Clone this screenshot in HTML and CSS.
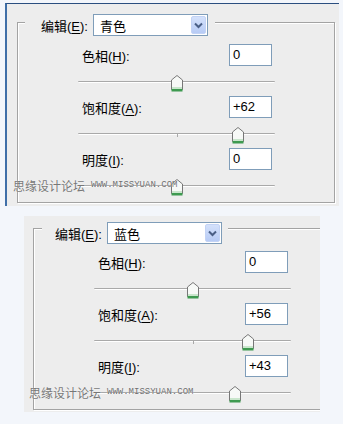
FILE: index.html
```html
<!DOCTYPE html>
<html lang="zh-CN">
<head>
    <meta charset="UTF-8">
    <title>色相/饱和度</title>
    <link rel="stylesheet" href="styles.css">
</head>
<body>
    <!-- first dialog: cyan channel -->
    <div class="panel panel-main">
        <div class="group">
            <div class="group-head">
                <span class="label">编辑(<u>E</u>):</span>
                <div class="select">
                    <span class="select-value">青色</span>
                    <span class="select-btn">
                        <svg width="9" height="7" viewBox="0 0 9 7"><path d="M1 1.5 L4.5 5 L8 1.5" fill="none" stroke="#4a5f86" stroke-width="2"/></svg>
                    </span>
                </div>
            </div>
            <div class="group-body">
                <div class="field"><span class="label">色相(<u>H</u>):</span><div class="num">0</div></div>
                <div class="slider">
                    <div class="track"></div>
                    <div class="thumb" style="left: 50%"><svg width="12" height="17" viewBox="0 0 12 17"><path d="M6 0.5 L11.5 5 L11.5 14.5 L0.5 14.5 L0.5 5 Z" fill="#f7f9f7" stroke="#777"/><rect x="1" y="12" width="10" height="2.5" fill="#c9e6cc"/><rect x="0.5" y="14" width="11" height="2.5" fill="#3e9a50"/></svg></div>
                </div>
                <div class="field"><span class="label">饱和度(<u>A</u>):</span><div class="num">+62</div></div>
                <div class="slider">
                    <div class="track"></div>
                    <div class="tick"></div>
                    <div class="thumb" style="left: 81%"><svg width="12" height="17" viewBox="0 0 12 17"><path d="M6 0.5 L11.5 5 L11.5 14.5 L0.5 14.5 L0.5 5 Z" fill="#f7f9f7" stroke="#777"/><rect x="1" y="12" width="10" height="2.5" fill="#c9e6cc"/><rect x="0.5" y="14" width="11" height="2.5" fill="#3e9a50"/></svg></div>
                </div>
                <div class="field"><span class="label">明度(<u>I</u>):</span><div class="num">0</div></div>
                <div class="slider">
                    <div class="track"></div>
                    <div class="thumb" style="left: 50%"><svg width="12" height="17" viewBox="0 0 12 17"><path d="M6 0.5 L11.5 5 L11.5 14.5 L0.5 14.5 L0.5 5 Z" fill="#f7f9f7" stroke="#777"/><rect x="1" y="12" width="10" height="2.5" fill="#c9e6cc"/><rect x="0.5" y="14" width="11" height="2.5" fill="#3e9a50"/></svg></div>
                    <div class="watermark">思缘设计论坛<span>WWW.MISSYUAN.COM</span></div>
                </div>
            </div>
        </div>
    </div>

    <!-- second dialog: blue channel -->
    <div class="panel panel-alt">
        <div class="group">
            <div class="group-head">
                <span class="label">编辑(<u>E</u>):</span>
                <div class="select">
                    <span class="select-value">蓝色</span>
                    <span class="select-btn">
                        <svg width="9" height="7" viewBox="0 0 9 7"><path d="M1 1.5 L4.5 5 L8 1.5" fill="none" stroke="#4a5f86" stroke-width="2"/></svg>
                    </span>
                </div>
            </div>
            <div class="group-body">
                <div class="field"><span class="label">色相(<u>H</u>):</span><div class="num">0</div></div>
                <div class="slider">
                    <div class="track"></div>
                    <div class="thumb" style="left: 50%"><svg width="12" height="17" viewBox="0 0 12 17"><path d="M6 0.5 L11.5 5 L11.5 14.5 L0.5 14.5 L0.5 5 Z" fill="#f7f9f7" stroke="#777"/><rect x="1" y="12" width="10" height="2.5" fill="#c9e6cc"/><rect x="0.5" y="14" width="11" height="2.5" fill="#3e9a50"/></svg></div>
                </div>
                <div class="field"><span class="label">饱和度(<u>A</u>):</span><div class="num">+56</div></div>
                <div class="slider">
                    <div class="track"></div>
                    <div class="tick"></div>
                    <div class="thumb" style="left: 78%"><svg width="12" height="17" viewBox="0 0 12 17"><path d="M6 0.5 L11.5 5 L11.5 14.5 L0.5 14.5 L0.5 5 Z" fill="#f7f9f7" stroke="#777"/><rect x="1" y="12" width="10" height="2.5" fill="#c9e6cc"/><rect x="0.5" y="14" width="11" height="2.5" fill="#3e9a50"/></svg></div>
                </div>
                <div class="field"><span class="label">明度(<u>I</u>):</span><div class="num">+43</div></div>
                <div class="slider">
                    <div class="track"></div>
                    <div class="thumb" style="left: 71.5%"><svg width="12" height="17" viewBox="0 0 12 17"><path d="M6 0.5 L11.5 5 L11.5 14.5 L0.5 14.5 L0.5 5 Z" fill="#f7f9f7" stroke="#777"/><rect x="1" y="12" width="10" height="2.5" fill="#c9e6cc"/><rect x="0.5" y="14" width="11" height="2.5" fill="#3e9a50"/></svg></div>
                    <div class="watermark">思缘设计论坛<span>WWW.MISSYUAN.COM</span></div>
                </div>
            </div>
        </div>
    </div>
</body>
</html>
```

FILE: styles.css
```css
body {
    margin: 0;
    background-color: #f3f6fb;
    font-family: "Liberation Sans", "Noto Sans CJK SC", sans-serif;
    font-size: 13px;
    color: #000;
}

u {
    text-decoration: underline;
    text-underline-offset: 2px;
}

/* dialog background */
.panel {
    box-sizing: border-box;
    background-color: #ededed;
}

.panel-main {
    margin: 3px 0 0 5px;
    width: 334px;
    height: 203px;
    border-top: 1px solid #2b4f80;
    border-left: 2px solid #3f6fa8;
}

.panel-alt {
    margin: 10px 0 0 24px;
    width: 296px;
    height: 196px;
    overflow: hidden;
}

/* etched group box */
.group {
    box-sizing: border-box;
    border: 1px solid #a3a3a3;
    box-shadow: 1px 1px 0 #fff, inset 1px 1px 0 #fff;
}

.panel-main .group {
    margin: 18px 0 0 10px;
    width: 318px;
    height: 181px;
}

.panel-alt .group {
    margin: 12px 0 0 9px;
    width: 330px;
    height: 182px;
}

.group-head {
    display: flex;
    align-items: center;
    gap: 5px;
    width: fit-content;
    height: 22px;
    background-color: #ededed;
}

.panel-main .group-head {
    margin: -9px 0 0 7px;
    padding: 0 7px 0 16px;
}

.panel-alt .group-head {
    margin: -7px 0 0 8px;
    padding: 0 6px 0 13px;
}

.select {
    box-sizing: border-box;
    display: flex;
    align-items: center;
    justify-content: space-between;
    width: 115px;
    height: 22px;
    padding: 0 1px 0 6px;
    background-color: #fff;
    border: 1px solid #7f9db9;
}

.select-btn {
    box-sizing: border-box;
    display: flex;
    align-items: center;
    justify-content: center;
    width: 15px;
    height: 18px;
    background: linear-gradient(#d4e1fb, #b7cbf5);
    border: 1px solid #c3d3f5;
    border-radius: 2px;
}

.group-body {
    width: 197px;
    margin: 8px 0 0 60px;
}

.panel-alt .group-body {
    margin-top: 7px;
}

.field {
    display: flex;
    align-items: center;
    justify-content: space-between;
    height: 22px;
    padding: 0 3px 0 4px;
}

.num {
    box-sizing: border-box;
    width: 43px;
    height: 22px;
    padding: 0 3px;
    line-height: 20px;
    background-color: #fff;
    border: 1px solid #7f9db9;
}

.slider {
    position: relative;
    height: 30px;
}

.track {
    position: absolute;
    top: 15px;
    left: 0;
    right: 0;
    height: 1px;
    background-color: #a9a9a9;
    border-bottom: 1px solid #fff;
    border-radius: 1px;
}

.tick {
    position: absolute;
    top: 15px;
    left: 50%;
    width: 1px;
    height: 4px;
    background-color: #a9a9a9;
}

.thumb {
    position: absolute;
    top: 9px;
    width: 12px;
    height: 17px;
    transform: translateX(-50%);
}

.thumb svg {
    display: block;
}

/* site watermark laid over the last slider */
.watermark {
    position: absolute;
    top: 7px;
    left: -65px;
    display: flex;
    align-items: center;
    gap: 6px;
    height: 16px;
    font-size: 12px;
    color: #777;
    white-space: nowrap;
    text-shadow: 0 0 1px #fff;
}

.watermark span {
    font-family: "Liberation Mono", monospace;
    font-size: 9px;
    color: #6f6f6f;
}
```
